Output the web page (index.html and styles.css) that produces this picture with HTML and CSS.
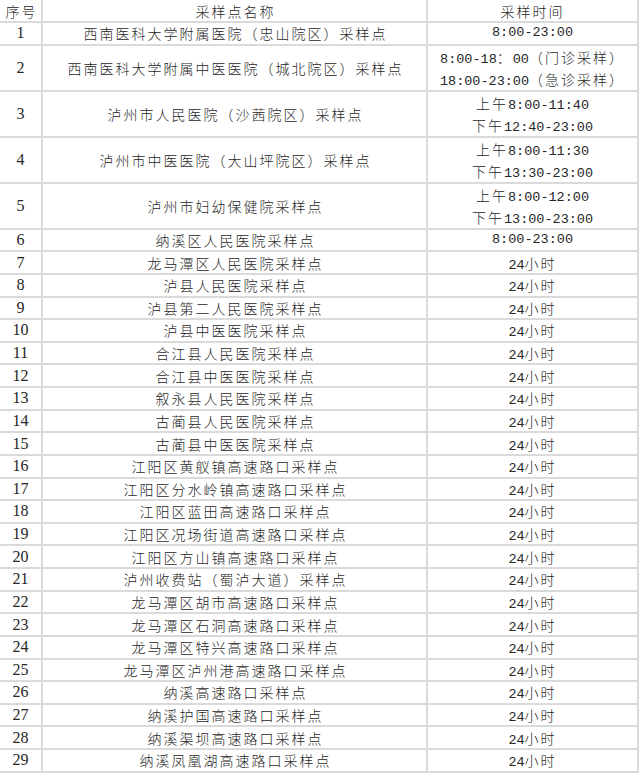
FILE: index.html
```html
<!DOCTYPE html>
<html lang="zh-CN">
<head>
<meta charset="utf-8">
<title>采样点</title>
<link rel="stylesheet" href="styles.css">
</head>
<body>
<div class="grid">
  <div class="c no cj">序号</div><div class="c name">采样点名称</div><div class="c time"><div class="ln"><span class="cj">采样时间</span></div></div>
  <div class="c no">1</div><div class="c name">西南医科大学附属医院（忠山院区）采样点</div><div class="c time"><div class="ln">8:00-23:00</div></div>
  <div class="c no">2</div><div class="c name">西南医科大学附属中医医院（城北院区）采样点</div><div class="c time two"><div class="ln">8:00-18<span class="cj">：</span>00<span class="cj">（门诊采样）</span></div><div class="ln">18:00-23:00<span class="cj">（急诊采样）</span></div></div>
  <div class="c no">3</div><div class="c name">泸州市人民医院（沙茜院区）采样点</div><div class="c time two"><div class="ln"><span class="cj">上午</span>8:00-11:40</div><div class="ln"><span class="cj">下午</span>12:40-23:00</div></div>
  <div class="c no">4</div><div class="c name">泸州市中医医院（大山坪院区）采样点</div><div class="c time two"><div class="ln"><span class="cj">上午</span>8:00-11:30</div><div class="ln"><span class="cj">下午</span>13:30-23:00</div></div>
  <div class="c no">5</div><div class="c name">泸州市妇幼保健院采样点</div><div class="c time two"><div class="ln"><span class="cj">上午</span>8:00-12:00</div><div class="ln"><span class="cj">下午</span>13:00-23:00</div></div>
  <div class="c no">6</div><div class="c name">纳溪区人民医院采样点</div><div class="c time"><div class="ln">8:00-23:00</div></div>
  <div class="c no">7</div><div class="c name">龙马潭区人民医院采样点</div><div class="c time"><div class="ln">24<span class="cj">小时</span></div></div>
  <div class="c no">8</div><div class="c name">泸县人民医院采样点</div><div class="c time"><div class="ln">24<span class="cj">小时</span></div></div>
  <div class="c no">9</div><div class="c name">泸县第二人民医院采样点</div><div class="c time"><div class="ln">24<span class="cj">小时</span></div></div>
  <div class="c no">10</div><div class="c name">泸县中医医院采样点</div><div class="c time"><div class="ln">24<span class="cj">小时</span></div></div>
  <div class="c no">11</div><div class="c name">合江县人民医院采样点</div><div class="c time"><div class="ln">24<span class="cj">小时</span></div></div>
  <div class="c no">12</div><div class="c name">合江县中医医院采样点</div><div class="c time"><div class="ln">24<span class="cj">小时</span></div></div>
  <div class="c no">13</div><div class="c name">叙永县人民医院采样点</div><div class="c time"><div class="ln">24<span class="cj">小时</span></div></div>
  <div class="c no">14</div><div class="c name">古蔺县人民医院采样点</div><div class="c time"><div class="ln">24<span class="cj">小时</span></div></div>
  <div class="c no">15</div><div class="c name">古蔺县中医医院采样点</div><div class="c time"><div class="ln">24<span class="cj">小时</span></div></div>
  <div class="c no">16</div><div class="c name">江阳区黄舣镇高速路口采样点</div><div class="c time"><div class="ln">24<span class="cj">小时</span></div></div>
  <div class="c no">17</div><div class="c name">江阳区分水岭镇高速路口采样点</div><div class="c time"><div class="ln">24<span class="cj">小时</span></div></div>
  <div class="c no">18</div><div class="c name">江阳区蓝田高速路口采样点</div><div class="c time"><div class="ln">24<span class="cj">小时</span></div></div>
  <div class="c no">19</div><div class="c name">江阳区况场街道高速路口采样点</div><div class="c time"><div class="ln">24<span class="cj">小时</span></div></div>
  <div class="c no">20</div><div class="c name">江阳区方山镇高速路口采样点</div><div class="c time"><div class="ln">24<span class="cj">小时</span></div></div>
  <div class="c no">21</div><div class="c name">泸州收费站（蜀泸大道）采样点</div><div class="c time"><div class="ln">24<span class="cj">小时</span></div></div>
  <div class="c no">22</div><div class="c name">龙马潭区胡市高速路口采样点</div><div class="c time"><div class="ln">24<span class="cj">小时</span></div></div>
  <div class="c no">23</div><div class="c name">龙马潭区石洞高速路口采样点</div><div class="c time"><div class="ln">24<span class="cj">小时</span></div></div>
  <div class="c no">24</div><div class="c name">龙马潭区特兴高速路口采样点</div><div class="c time"><div class="ln">24<span class="cj">小时</span></div></div>
  <div class="c no">25</div><div class="c name">龙马潭区泸州港高速路口采样点</div><div class="c time"><div class="ln">24<span class="cj">小时</span></div></div>
  <div class="c no">26</div><div class="c name">纳溪高速路口采样点</div><div class="c time"><div class="ln">24<span class="cj">小时</span></div></div>
  <div class="c no">27</div><div class="c name">纳溪护国高速路口采样点</div><div class="c time"><div class="ln">24<span class="cj">小时</span></div></div>
  <div class="c no">28</div><div class="c name">纳溪渠坝高速路口采样点</div><div class="c time"><div class="ln">24<span class="cj">小时</span></div></div>
  <div class="c no">29</div><div class="c name">纳溪凤凰湖高速路口采样点</div><div class="c time"><div class="ln">24<span class="cj">小时</span></div></div>
</div>
</body>
</html>
```

FILE: styles.css
```css
html, body {
  margin: 0;
  padding: 0;
  background: #ffffff;
}

.grid {
  display: grid;
  width: 639px;
  box-sizing: border-box;
  padding: 0 2px 2px 0;
  background: #dadada;
  grid-template-columns: 41px 383px 209px;
  grid-template-rows: 21px 20.64px 44px 44px 44px 44px 20.64px repeat(23, 20.64px);
  column-gap: 2px;
  row-gap: 2px;
  color: #262626;
}

.c {
  background: #ffffff;
  display: flex;
  flex-direction: column;
  align-items: center;
  justify-content: center;
  text-align: center;
  white-space: nowrap;
  line-height: 20px;
}

.no {
  font-family: "Liberation Serif", "Noto Sans CJK SC", serif;
  font-size: 16px;
}

.no.cj {
  font-family: "Noto Sans CJK SC", sans-serif;
  font-size: 14px;
  font-weight: 300;
  letter-spacing: 2px;
  padding-left: 2px;
}

.name {
  font-family: "Noto Sans CJK SC", sans-serif;
  font-size: 14px;
  letter-spacing: 2px;
  padding-left: 2px;
  font-weight: 300;
}

.time {
  font-family: "Liberation Mono", "Noto Sans CJK SC", monospace;
  font-size: 13.5px;
}

.ln {
  line-height: 20px;
  height: 20px;
}

.two .ln {
  line-height: 22px;
  height: 22px;
}

.time .cj {
  font-family: "Noto Sans CJK SC", sans-serif;
  font-size: 14px;
  font-weight: 300;
  letter-spacing: 2px;
}
```
